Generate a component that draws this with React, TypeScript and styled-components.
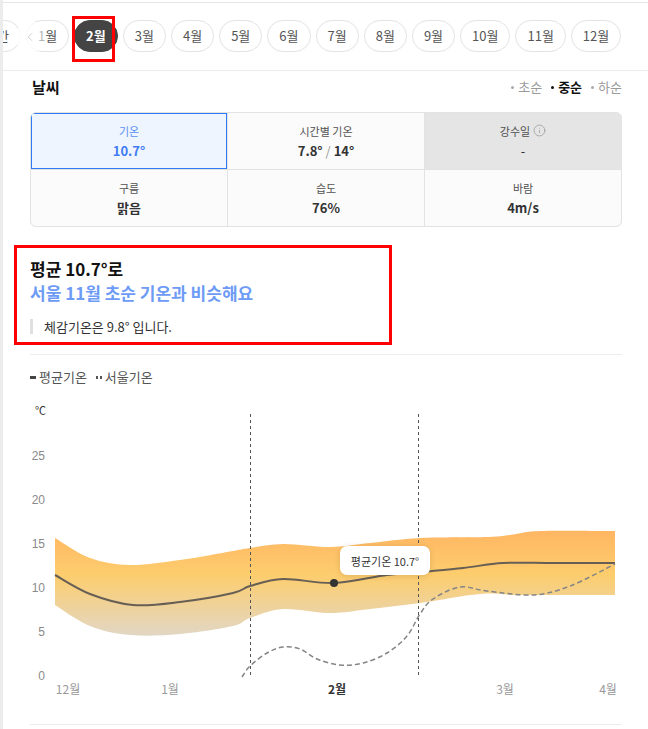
import React, { useLayoutEffect, useRef } from "react";
import styled, { createGlobalStyle } from "styled-components";
import { ChevronLeft, Info } from "lucide-react";

const GlobalStyle = createGlobalStyle`
  html, body {
    margin: 0;
    padding: 0;
    background: #fff;
  }
  body {
    font-family: "Noto Sans CJK KR", "Noto Sans", sans-serif;
    color: #333;
  }
`;

const Page = styled.div`
  min-height: 729px;
  border-left: 3px solid #ececec;
  padding-top: 2px;
  box-sizing: border-box;
`;

const Frame = styled.div`
  border-top: 1px solid #e6e6e6;
`;

const MonthBar = styled.div`
  position: relative;
  border-bottom: 1px solid #ececec;
`;

const MonthScroller = styled.div`
  display: flex;
  gap: 5px;
  padding: 17px 27px 18px;
  overflow: hidden;
`;

const Pill = styled.button<{ $active?: boolean }>`
  position: relative;
  flex: none;
  height: 32px;
  padding: 0 11px;
  border: 1px solid ${(p) => (p.$active ? "#444" : "#e3e3e3")};
  border-radius: 16px;
  background: ${(p) => (p.$active ? "#444" : "#fff")};
  color: ${(p) => (p.$active ? "#fff" : "#555")};
  font-family: inherit;
  font-size: 13px;
  font-weight: ${(p) => (p.$active ? 700 : 400)};
  line-height: 30px;
  cursor: pointer;

  ${(p) =>
    p.$active &&
    `
    &::after {
      content: "";
      position: absolute;
      left: -3px;
      top: -5px;
      width: 43px;
      height: 46px;
      border: 3px solid #f00;
      box-sizing: border-box;
    }
  `}
`;

const PrevButton = styled.div`
  position: absolute;
  left: 13px;
  top: 18px;
  width: 30px;
  height: 32px;
  display: flex;
  align-items: center;
  padding-left: 7px;
  box-sizing: border-box;
  border-radius: 16px;
  background: linear-gradient(90deg, rgba(255, 255, 255, 0.85) 30%, rgba(255, 255, 255, 0.5));
  color: #c8c8c8;
`;

const Content = styled.div`
  padding: 0 26px 0 27px;
`;

const HeadRow = styled.div`
  display: flex;
  justify-content: space-between;
  align-items: center;
  padding-top: 6px;
  height: 20px;
`;

const Title = styled.h2`
  margin: 0 0 0 2px;
  font-size: 15px;
  font-weight: 700;
  color: #111;
  line-height: 20px;
`;

const Periods = styled.div`
  display: flex;
  gap: 9px;
`;

const Period = styled.span<{ $active?: boolean }>`
  display: flex;
  align-items: center;
  gap: 4px;
  font-size: 13px;
  line-height: 18px;
  color: ${(p) => (p.$active ? "#111" : "#9a9a9a")};
  font-weight: ${(p) => (p.$active ? 700 : 400)};

  &::before {
    content: "";
    width: 3px;
    height: 3px;
    border-radius: 50%;
    background: ${(p) => (p.$active ? "#111" : "#aaa")};
  }
`;

const StatGrid = styled.div`
  margin-top: 15px;
  display: grid;
  grid-template-columns: repeat(3, 1fr);
  gap: 1px;
  background: #e3e3e3;
  border: 1px solid #e3e3e3;
  border-radius: 6px;
  overflow: hidden;
`;

const StatCell = styled.div<{ $active?: boolean; $muted?: boolean }>`
  height: 56px;
  display: flex;
  flex-direction: column;
  align-items: center;
  justify-content: center;
  background: ${(p) => (p.$active ? "#eef5ff" : p.$muted ? "#e5e5e5" : "#fbfbfb")};
  box-shadow: ${(p) => (p.$active ? "inset 0 0 0 1px #2f7af5" : "none")};
  color: ${(p) => (p.$active ? "#3f7cf3" : "#333")};
`;

const StatLabel = styled.div`
  display: flex;
  align-items: center;
  gap: 3px;
  font-size: 11px;
  line-height: 16px;
  opacity: 0.85;
`;

const StatValue = styled.div<{ $plain?: boolean }>`
  margin-top: 3px;
  font-size: 13px;
  font-weight: ${(p) => (p.$plain ? 400 : 700)};
  line-height: 18px;
`;

const Slash = styled.span`
  color: #999;
  font-weight: 400;
  margin: 0 3px;
`;

const Summary = styled.div`
  margin: 18px 0 0 -16px;
  width: 378px;
  box-sizing: border-box;
  border: 3px solid #f00;
  padding: 9px 13px 8px;
`;

const Headline = styled.div<{ $accent?: boolean }>`
  font-size: 17px;
  font-weight: 700;
  line-height: 24px;
  color: ${(p) => (p.$accent ? "#6d9bf5" : "#111")};
`;

const Quote = styled.div`
  margin-top: 14px;
  border-left: 3px solid #e0e0e0;
  padding-left: 11px;
  font-size: 13px;
  line-height: 15px;
  color: #333;
`;

const Divider = styled.hr`
  margin: 9px 0 0;
  border: 0;
  border-top: 1px solid #ececec;
`;

const Legend = styled.div`
  margin-top: 12px;
  display: flex;
  gap: 9px;
  font-size: 13px;
  line-height: 20px;
  color: #555;
`;

const LegendItem = styled.span<{ $dotted?: boolean }>`
  display: flex;
  align-items: center;
  gap: 3px;

  &::before {
    content: "";
    width: 6px;
    height: 3px;
    background: ${(p) =>
      p.$dotted
        ? "linear-gradient(90deg, #555 0 2px, transparent 2px 4px, #555 4px 6px)"
        : "#444"};
  }
`;

const ChartSection = styled.div`
  position: relative;
  margin-top: 9px;
  height: 305px;
  border-bottom: 1px solid #ececec;
  padding-bottom: 23px;
`;

const Tooltip = styled.div`
  position: absolute;
  left: 310px;
  top: 150px;
  width: 90px;
  height: 29px;
  display: flex;
  align-items: center;
  justify-content: center;
  background: #fff;
  border-radius: 7px;
  box-shadow: 0 1px 6px rgba(0, 0, 0, 0.12);
  font-size: 11px;
  color: #333;
`;

type Pt = [number, number];

const smooth = (pts: Pt[]) => {
  let d = `M${pts[0][0]},${pts[0][1]}`;
  for (let i = 0; i < pts.length - 1; i++) {
    const p0 = pts[i - 1] || pts[i];
    const p1 = pts[i];
    const p2 = pts[i + 1];
    const p3 = pts[i + 2] || p2;
    const c1x = p1[0] + (p2[0] - p0[0]) / 6;
    const c1y = p1[1] + (p2[1] - p0[1]) / 6;
    const c2x = p2[0] - (p3[0] - p1[0]) / 6;
    const c2y = p2[1] - (p3[1] - p1[1]) / 6;
    d += ` C${c1x.toFixed(1)},${c1y.toFixed(1)} ${c2x.toFixed(1)},${c2y.toFixed(1)} ${p2[0]},${p2[1]}`;
  }
  return d;
};

const bandTop: Pt[] = [
  [55, 537], [90, 557], [130, 564], [180, 559], [233, 550], [250, 547], [283, 543],
  [330, 546], [370, 542], [420, 537], [487, 536], [510, 534], [540, 530], [615, 530],
];
const bandBottom: Pt[] = [
  [55, 604], [90, 625], [130, 634], [180, 633], [233, 625], [250, 617], [283, 608],
  [330, 612], [370, 608], [420, 602], [480, 593], [520, 594], [615, 594],
];
const meanLine: Pt[] = [
  [55, 574], [90, 593], [133, 604], [180, 601], [233, 592], [250, 585], [283, 578],
  [334, 582], [387, 574], [420, 571], [463, 567], [503, 562], [553, 562], [615, 562],
];
const seoulLine: Pt[] = [
  [242, 676], [250, 665], [267, 652], [283, 646], [300, 648], [317, 658], [340, 664],
  [363, 662], [387, 652], [407, 635], [420, 613], [433, 598], [460, 586], [487, 590],
  [533, 594], [570, 585], [615, 563],
];

const bandPath =
  smooth(bandTop) + " L" + smooth([...bandBottom].reverse()).slice(1) + " Z";

const yTicks = [25, 20, 15, 10, 5, 0];
const xTicks = [
  { x: 68, label: "12월" },
  { x: 170, label: "1월" },
  { x: 337, label: "2월", bold: true },
  { x: 505, label: "3월" },
  { x: 608, label: "4월" },
];

const TempChart = () => (
  <svg width="592" height="305" viewBox="30 395 592 305" style={{ display: "block" }}>
    <defs>
      <linearGradient id="band" x1="0" y1="528" x2="0" y2="636" gradientUnits="userSpaceOnUse">
        <stop offset="0" stopColor="#ffb562" />
        <stop offset="0.42" stopColor="#fdcd6d" />
        <stop offset="1" stopColor="#e1d7c6" />
      </linearGradient>
    </defs>
    <text x="35" y="414" fontSize="11" fill="#333">℃</text>
    {yTicks.map((t) => (
      <text
        key={t}
        x="45"
        y={675 - t * 8.8 + 4}
        fontSize="12"
        fill="#8a8a8a"
        textAnchor="end"
        fontFamily="Liberation Sans, sans-serif"
      >
        {t}
      </text>
    ))}
    <path d={bandPath} fill="url(#band)" />
    <path d={smooth(meanLine)} fill="none" stroke="#675f55" strokeWidth="2" />
    <path
      d={smooth(seoulLine)}
      fill="none"
      stroke="#858585"
      strokeWidth="1.5"
      strokeDasharray="5 3"
    />
    <line x1="250.5" y1="413" x2="250.5" y2="676" stroke="#555" strokeDasharray="3 3" />
    <line x1="418.5" y1="413" x2="418.5" y2="676" stroke="#555" strokeDasharray="3 3" />
    <circle cx="334" cy="582" r="4" fill="#333" />
    {xTicks.map((t) => (
      <text
        key={t.label}
        x={t.x}
        y="693"
        fontSize="12"
        fill={t.bold ? "#333" : "#999"}
        fontWeight={t.bold ? 700 : 400}
        textAnchor="middle"
      >
        {t.label}
      </text>
    ))}
  </svg>
);

const months = Array.from({ length: 12 }, (_, i) => `${i + 1}월`);

const App = () => {
  const scrollerRef = useRef<HTMLDivElement>(null);
  const firstRef = useRef<HTMLButtonElement>(null);

  // scroll the month strip so that 1월 sits just right of the prev button
  useLayoutEffect(() => {
    if (scrollerRef.current && firstRef.current) {
      scrollerRef.current.scrollLeft = firstRef.current.offsetLeft - scrollerRef.current.offsetLeft - 23;
    }
  }, []);

  return (
    <>
      <GlobalStyle />
      <Page>
        <Frame>
          <MonthBar>
            <MonthScroller ref={scrollerRef}>
              <Pill>연간</Pill>
              {months.map((m, i) => (
                <Pill key={m} ref={i === 0 ? firstRef : undefined} $active={i === 1}>
                  {m}
                </Pill>
              ))}
            </MonthScroller>
            <PrevButton>
              <ChevronLeft size={14} strokeWidth={1.5} />
            </PrevButton>
          </MonthBar>

          <Content>
            <HeadRow>
              <Title>날씨</Title>
              <Periods>
                <Period>초순</Period>
                <Period $active>중순</Period>
                <Period>하순</Period>
              </Periods>
            </HeadRow>

            <StatGrid>
              <StatCell $active>
                <StatLabel>기온</StatLabel>
                <StatValue>10.7°</StatValue>
              </StatCell>
              <StatCell>
                <StatLabel>시간별 기온</StatLabel>
                <StatValue>
                  7.8°<Slash>/</Slash>14°
                </StatValue>
              </StatCell>
              <StatCell $muted>
                <StatLabel>
                  강수일 <Info size={13} strokeWidth={1.3} color="#888" />
                </StatLabel>
                <StatValue $plain>-</StatValue>
              </StatCell>
              <StatCell>
                <StatLabel>구름</StatLabel>
                <StatValue>맑음</StatValue>
              </StatCell>
              <StatCell>
                <StatLabel>습도</StatLabel>
                <StatValue>76%</StatValue>
              </StatCell>
              <StatCell>
                <StatLabel>바람</StatLabel>
                <StatValue>4m/s</StatValue>
              </StatCell>
            </StatGrid>

            <Summary>
              <Headline>평균 10.7°로</Headline>
              <Headline $accent>서울 11월 초순 기온과 비슷해요</Headline>
              <Quote>체감기온은 9.8° 입니다.</Quote>
            </Summary>

            <Divider />

            <Legend>
              <LegendItem>평균기온</LegendItem>
              <LegendItem $dotted>서울기온</LegendItem>
            </Legend>

            <ChartSection>
              <TempChart />
              <Tooltip>평균기온 10.7°</Tooltip>
            </ChartSection>
          </Content>
        </Frame>
      </Page>
    </>
  );
};

export default App;
